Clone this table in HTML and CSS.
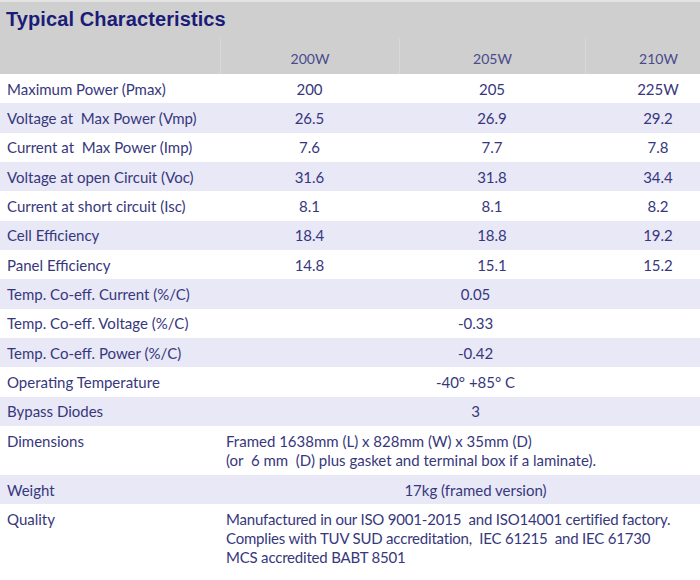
FILE: index.html
```html
<!DOCTYPE html>
<html>
<head>
<meta charset="utf-8">
<link rel="stylesheet" href="styles.css">
</head>
<body>
<div class="sheet">
  <div class="title">Typical Characteristics</div>
  <div class="row head">
    <div class="cell"></div>
    <div class="cell val">200W</div>
    <div class="cell val">205W</div>
    <div class="cell val">210W</div>
  </div>
  <div class="row">
    <div class="lbl">Maximum Power (Pmax)</div>
    <div class="val">200</div><div class="val">205</div><div class="val">225W</div>
  </div>
  <div class="row alt">
    <div class="lbl">Voltage at&nbsp; Max Power (Vmp)</div>
    <div class="val">26.5</div><div class="val">26.9</div><div class="val">29.2</div>
  </div>
  <div class="row">
    <div class="lbl">Current at&nbsp; Max Power (Imp)</div>
    <div class="val">7.6</div><div class="val">7.7</div><div class="val">7.8</div>
  </div>
  <div class="row alt">
    <div class="lbl">Voltage at open Circuit (Voc)</div>
    <div class="val">31.6</div><div class="val">31.8</div><div class="val">34.4</div>
  </div>
  <div class="row">
    <div class="lbl">Current at short circuit (Isc)</div>
    <div class="val">8.1</div><div class="val">8.1</div><div class="val">8.2</div>
  </div>
  <div class="row alt">
    <div class="lbl">Cell Efficiency</div>
    <div class="val">18.4</div><div class="val">18.8</div><div class="val">19.2</div>
  </div>
  <div class="row">
    <div class="lbl">Panel Efficiency</div>
    <div class="val">14.8</div><div class="val">15.1</div><div class="val">15.2</div>
  </div>
  <div class="row alt">
    <div class="lbl">Temp. Co-eff. Current (%/C)</div>
    <div class="span val">0.05</div>
  </div>
  <div class="row">
    <div class="lbl">Temp. Co-eff. Voltage (%/C)</div>
    <div class="span val">-0.33</div>
  </div>
  <div class="row alt">
    <div class="lbl">Temp. Co-eff. Power (%/C)</div>
    <div class="span val">-0.42</div>
  </div>
  <div class="row">
    <div class="lbl">Operating Temperature</div>
    <div class="span val">-40° +85° C</div>
  </div>
  <div class="row alt">
    <div class="lbl">Bypass Diodes</div>
    <div class="span val">3</div>
  </div>
  <div class="row multi dims">
    <div class="lbl">Dimensions</div>
    <div class="span txt">Framed 1638mm (L) x 828mm (W) x 35mm (D)<br>(or&nbsp; 6 mm&nbsp; (D) plus gasket and terminal box if a laminate).</div>
  </div>
  <div class="row alt">
    <div class="lbl">Weight</div>
    <div class="span val">17kg (framed version)</div>
  </div>
  <div class="row multi">
    <div class="lbl">Quality</div>
    <div class="span txt tight">Manufactured in our ISO 9001-2015&nbsp; and ISO14001 certified factory.<br>Complies with TUV SUD accreditation,&nbsp; IEC 61215&nbsp; and IEC 61730<br>MCS accredited BABT 8501</div>
  </div>
</div>
</body>
</html>
```

FILE: styles.css
```css
html, body {
  margin: 0;
  padding: 0;
  background: #ffffff;
  overflow: hidden;
}
.sheet {
  width: 731px;
  font-family: "Lato", "DejaVu Sans", sans-serif;
  font-size: 15px;
  color: #37377c;
}
.title {
  background: #cfcfcf;
  border-top: 2px solid #e4e4e4;
  height: 38px;
  box-sizing: border-box;
  padding: 6px 0 0 6px;
  font-family: "Liberation Sans", sans-serif;
  font-weight: bold;
  font-size: 20px;
  letter-spacing: 0.1px;
  color: #1b1b78;
}
.row {
  display: grid;
  grid-template-columns: 220px 179px 186px 146px;
  height: 29.33px;
  align-items: center;
  background: #ffffff;
}
.row.alt {
  background: #e8e8f7;
}
.row.head {
  background: #cfcfcf;
  height: 36px;
  align-items: stretch;
  color: #4a4a8c;
  font-size: 14px;
}
.head .cell {
  display: flex;
  align-items: center;
  justify-content: center;
  padding-top: 4px;
}
.head .cell + .cell {
  border-left: 1px solid #d8d8d8;
}
.lbl {
  padding-left: 7px;
  white-space: nowrap;
}
.val {
  text-align: center;
}
.span {
  grid-column: 2 / span 3;
}
.row.multi {
  height: auto;
  align-items: start;
  padding: 6px 0 5px;
  line-height: 19px;
}
.row.multi.dims {
  height: 49px;
  box-sizing: border-box;
}
.txt {
  padding-left: 6px;
  white-space: nowrap;
}
.txt.tight {
  letter-spacing: -0.2px;
}
```
